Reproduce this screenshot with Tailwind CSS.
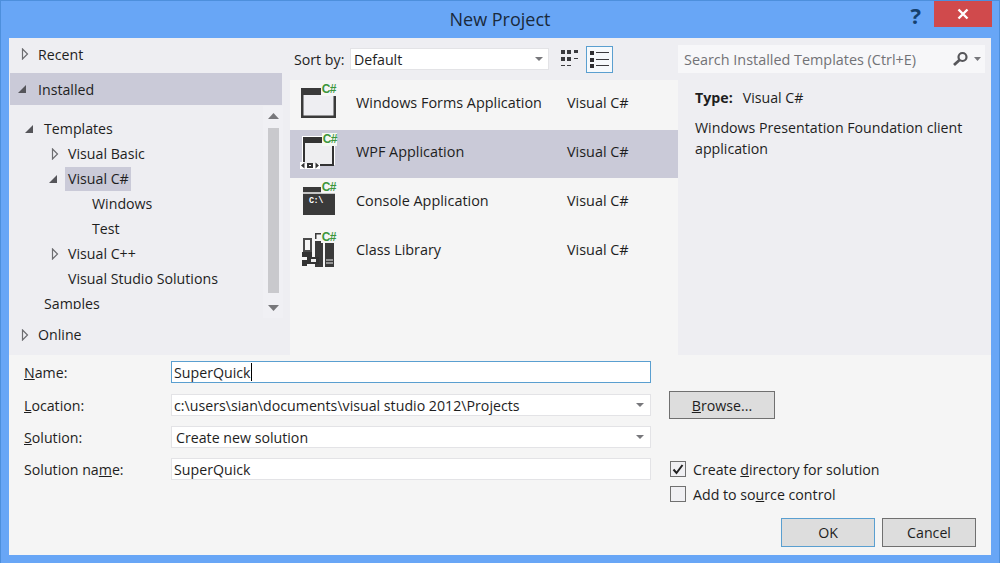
<!DOCTYPE html>
<html lang="en">
<head>
    <meta charset="UTF-8">
    <title>New Project</title>
    <script src="https://cdn.jsdelivr.net/npm/@tailwindcss/browser@4"></script>
</head>
<body class="w-[1000px] h-[563px] overflow-hidden bg-[#68a6f6] font-['Open_Sans',sans-serif] text-[14.2px] leading-[21px] text-[#1e1e1e]">
    <div class="h-[563px] flex flex-col border-t border-x border-[#4d8fdc] px-[8px] pb-[8px]">
        <!-- title bar -->
        <div class="h-[37px] shrink-0 flex items-start relative">
            <div class="flex-1 text-center text-[18px] leading-[27px] text-[#1a2a3c] pt-[5px]">New Project</div>
            <div class="absolute right-[70px] top-[-1px] text-[22px] leading-[30px] font-bold text-[#14406e]">?</div>
            <div class="absolute right-[-1px] top-0 w-[58px] h-[26px] bg-[#d04a4c] flex items-center justify-center">
                <svg width="12" height="12" viewBox="0 0 12 12"><path d="M1.5 1.5l9 9M10.5 1.5l-9 9" stroke="#fff" stroke-width="2.4"/></svg>
            </div>
        </div>
        <div class="flex-1 flex flex-col bg-[#f5f5f5]">
            <div class="h-[317px] shrink-0 flex bg-[#eeeef2]">
                <!-- left tree -->
                <div class="w-[281px] shrink-0 pl-[1px] flex flex-col">
                    <div class="h-[35px] flex items-center pb-[3px]">
                        <svg class="ml-[11px] mr-[9px]" width="8" height="12" viewBox="0 0 8 12"><path d="M1.5 1l5 5-5 5z" fill="none" stroke="#6d6d70" stroke-width="1.2"/></svg>
                        <span>Recent</span>
                    </div>
                    <div class="h-[32px] mr-[8px] flex items-center bg-[#cacad8]">
                        <svg class="ml-[7px] mr-[11px]" width="10" height="10" viewBox="0 0 10 10"><path d="M9 1v8H1z" fill="#55555a"/></svg>
                        <span>Installed</span>
                    </div>
                    <div class="h-[213px] flex">
                        <div class="flex-1 h-[204px] overflow-hidden pt-[11px]">
                            <div class="h-[25px] flex items-center">
                                <svg class="ml-[14px] mr-[10px]" width="10" height="10" viewBox="0 0 10 10"><path d="M9 1v8H1z" fill="#55555a"/></svg>
                                <span>Templates</span>
                            </div>
                            <div class="h-[25px] flex items-center">
                                <svg class="ml-[41px] mr-[9px]" width="8" height="12" viewBox="0 0 8 12"><path d="M1.5 1l5 5-5 5z" fill="none" stroke="#6d6d70" stroke-width="1.2"/></svg>
                                <span>Visual Basic</span>
                            </div>
                            <div class="h-[25px] flex items-center">
                                <svg class="ml-[38px] mr-[9px]" width="10" height="10" viewBox="0 0 10 10"><path d="M9 1v8H1z" fill="#55555a"/></svg>
                                <span class="bg-[#cacad8] h-[24px] leading-[24px] pl-[3px] pr-[2px] -ml-[2px]">Visual C#</span>
                            </div>
                            <div class="h-[25px] flex items-center pl-[82px]">Windows</div>
                            <div class="h-[25px] flex items-center pl-[82px]">Test</div>
                            <div class="h-[25px] flex items-center">
                                <svg class="ml-[41px] mr-[9px]" width="8" height="12" viewBox="0 0 8 12"><path d="M1.5 1l5 5-5 5z" fill="none" stroke="#6d6d70" stroke-width="1.2"/></svg>
                                <span>Visual C++</span>
                            </div>
                            <div class="h-[25px] flex items-center pl-[58px]">Visual Studio Solutions</div>
                            <div class="h-[25px] flex items-center pl-[34px]">Samples</div>
                        </div>
                        <!-- scrollbar -->
                        <div class="w-[20px] mr-[7px] mt-[1px] h-[212px] bg-[#f0f0f4] flex flex-col items-center">
                            <svg class="mt-[7px]" width="11" height="6" viewBox="0 0 11 6"><path d="M5.500 0l5.500 6H0z" fill="#77777b"/></svg>
                            <div class="w-[11px] h-[165px] mt-[9px] bg-[#c9c9cd]"></div>
                            <svg class="mt-[12px]" width="11" height="6" viewBox="0 0 11 6"><path d="M5.500 6l5.500-6H0z" fill="#77777b"/></svg>
                        </div>
                    </div>
                    <div class="h-[33px] flex items-center">
                        <svg class="ml-[11px] mr-[9px]" width="8" height="12" viewBox="0 0 8 12"><path d="M1.5 1l5 5-5 5z" fill="none" stroke="#6d6d70" stroke-width="1.2"/></svg>
                        <span>Online</span>
                    </div>
                </div>
                <!-- template list -->
                <div class="w-[388px] shrink-0 flex flex-col">
                    <div class="h-[42px] shrink-0 flex items-center pl-[4px]">
                        <span class="w-[56px]">Sort by:</span>
                        <div class="w-[199px] h-[22px] bg-white border border-[#e3e3e6] flex items-center pl-[3px] pr-[5px] justify-between">
                            <span>Default</span>
                            <svg width="8" height="4" viewBox="0 0 8 4"><path d="M0 0h8L4 4z" fill="#77777b"/></svg>
                        </div>
                        <svg class="ml-[12px]" width="17" height="18" viewBox="0 0 17 18" fill="#3a3a3e"><path d="M0 0h4v4H0zM6 0h4v4H6zM13 0h4v3h-4zM0 7h4v4H0zM6 7h4v4H6zM13 8h4v1h-4zM0 15h4v1H0zM6 15h4v1H6z"/></svg>
                        <div class="ml-[8px] w-[27px] h-[27px] border border-[#5a9fd0] bg-[#f6f9fc] flex items-center justify-center">
                            <svg width="19" height="19" viewBox="0 0 19 19"><path d="M0 1h4v4H0zM0 8h4v4H0zM0 14h4v4H0z" fill="#2f2f33"/><path d="M6 2.500h13M6 9.500h13M6 15.500h13" stroke="#3a3a3e"/></svg>
                        </div>
                    </div>
                    <div class="flex-1 bg-[#f5f5f5] pt-[1px] text-[14.4px]">
                        <div class="h-[49px] pb-[7px] flex items-center">
                            <div class="relative w-[36px] h-[36px] mt-[2px] ml-[10px] mr-[20px]">
                                <svg width="36" height="36" viewBox="0 0 36 36"><path d="M2 5h32v26H2z" fill="#eeeef2"/><path d="M1 3h21v7H1zM1 3h2.500v30H1zM33.500 10H36v23h-2.500zM1 30.500h35V33H1z" fill="#3a3a3a"/></svg>
                                <span class="absolute right-0 top-[-3px] pl-[1px] bg-[#f5f5f5] font-['Liberation_Sans',sans-serif] font-bold text-[12px] leading-[14px] tracking-[-0.5px] text-[#3c963c]">C#</span>
                            </div>
                            <span class="w-[211px]">Windows Forms Application</span>
                            <span>Visual C#</span>
                        </div>
                        <div class="h-[48px] pb-[6px] flex items-center bg-[#cacad8]">
                            <div class="relative w-[36px] h-[36px] ml-[10px] mr-[20px]">
                                <svg width="36" height="36" viewBox="0 0 36 36"><path d="M2 3h33v29H2zM0 29h20v7H0z" fill="#fff"/><path d="M3 4h22v6H3zM3 4h2v25H3zM32 10h2v22h-2zM20 31h14v2H20z" fill="#333"/><path d="M5 10h27v21H5z" fill="#eeeef0"/><path d="M1 32.500l3.500-3v6zM19 32.500l-3.500-3v6zM7 30h6v5H7z" fill="#333"/><path d="M9 32h2v1H9z" fill="#fff"/></svg>
                                <span class="absolute right-[-1px] top-0 pl-[1px] bg-[#f4f8f2] font-['Liberation_Sans',sans-serif] font-bold text-[12px] leading-[13px] tracking-[-0.5px] text-[#3c963c]">C#</span>
                            </div>
                            <span class="w-[211px]">WPF Application</span>
                            <span>Visual C#</span>
                        </div>
                        <div class="h-[49px] pb-[5px] flex items-center">
                            <div class="relative w-[36px] h-[36px] ml-[10px] mr-[20px]">
                                <svg width="36" height="36" viewBox="0 0 36 36"><path d="M3 5h32v28H3z" fill="#3a3a3a"/><path d="M3 11h32" stroke="#f5f5f5" stroke-width="1.500"/></svg>
                                <span class="absolute left-[9px] top-[14px] font-['Liberation_Mono',monospace] font-bold text-[8.500px] leading-[10px] tracking-[-0.5px] text-white">C:\</span>
                                <span class="absolute right-0 top-0 pl-[1px] bg-[#f5f5f5] font-['Liberation_Sans',sans-serif] font-bold text-[12px] leading-[11px] tracking-[-0.5px] text-[#3c963c]">C#</span>
                            </div>
                            <span class="w-[211px]">Console Application</span>
                            <span>Visual C#</span>
                        </div>
                        <div class="h-[49px] pb-[5px] flex items-center">
                            <div class="relative w-[36px] h-[36px] ml-[10px] mr-[20px]">
                                <svg width="36" height="36" viewBox="0 0 36 36"><path d="M4 8h7v12H4z" fill="none" stroke="#4a4a4a" stroke-width="2"/><path d="M15 2h6v1.500h-4.500V8H15zM15 10h8v26h-8zM25 7h9v29h-9z" fill="#3a3a3a"/><path d="M26 29h7M26 32h7" stroke="#eee"/><path d="M2 21h10v5H2zM7 26h12v7H7zM2 29h5v6H2z" fill="#333"/><path d="M11 28h5v3h-5z" fill="#eee"/></svg>
                                <span class="absolute right-0 top-[1px] pl-[1px] bg-[#f5f5f5] font-['Liberation_Sans',sans-serif] font-bold text-[12px] leading-[11px] tracking-[-0.5px] text-[#3c963c]">C#</span>
                            </div>
                            <span class="w-[211px]">Class Library</span>
                            <span>Visual C#</span>
                        </div>
                    </div>
                </div>
                <!-- search and details -->
                <div class="flex-1 flex flex-col">
                    <div class="h-[28px] mt-[7px] mr-[6px] shrink-0 bg-[#f7f7f9] flex items-center pl-[6px] pr-[4px] text-[14.4px] text-[#727276]">
                        <span class="flex-1">Search Installed Templates (Ctrl+E)</span>
                        <svg width="17" height="16" viewBox="0 0 17 16"><circle cx="10.500" cy="6" r="4" fill="none" stroke="#56565a" stroke-width="2.200"/><path d="M7.500 9L2 14" stroke="#56565a" stroke-width="2.800"/></svg>
                        <svg class="ml-[5px]" width="7" height="4" viewBox="0 0 7 4"><path d="M0 0h7L3.500 4z" fill="#77777b"/></svg>
                    </div>
                    <div class="flex-1 px-[17px] pt-[14px]">
                        <p class="h-[30px]"><b class="font-bold mr-[10px]">Type:</b>Visual C#</p>
                        <p>Windows Presentation Foundation client application</p>
                    </div>
                </div>
            </div>
            <!-- form -->
            <div class="flex-1 flex flex-col pl-[15px] pt-[6px] relative">
                <div class="flex items-center h-[22px]">
                    <label class="w-[147px]"><u>N</u>ame:</label>
                    <div class="w-[480px] h-[22px] bg-white border border-[#5a9fd0] flex items-center pl-[2px]">SuperQuick<span class="w-px h-[18px] bg-black"></span></div>
                </div>
                <div class="flex items-center h-[22px] mt-[11px]">
                    <label class="w-[147px]"><u>L</u>ocation:</label>
                    <div class="w-[480px] h-[22px] bg-white border border-[#e3e3e6] flex items-center justify-between pl-[2px] pr-[6px]">
                        <span>c:\users\sian\documents\visual studio 2012\Projects</span>
                        <svg width="8" height="4" viewBox="0 0 8 4"><path d="M0 0h8L4 4z" fill="#77777b"/></svg>
                    </div>
                    <button class="ml-[18px] w-[106px] h-[28px] bg-[#dddddd] border border-[#707070]"><u>B</u>rowse...</button>
                </div>
                <div class="flex items-center h-[22px] mt-[10px]">
                    <label class="w-[147px]"><u>S</u>olution:</label>
                    <div class="w-[480px] h-[22px] bg-white border border-[#e3e3e6] flex items-center justify-between pl-[4px] pr-[6px]">
                        <span>Create new solution</span>
                        <svg width="8" height="4" viewBox="0 0 8 4"><path d="M0 0h8L4 4z" fill="#77777b"/></svg>
                    </div>
                </div>
                <div class="flex items-center h-[22px] mt-[10px]">
                    <label class="w-[147px]">Solution na<u>m</u>e:</label>
                    <div class="w-[480px] h-[22px] bg-white border border-[#e3e3e6] flex items-center pl-[2px]">SuperQuick</div>
                    <div class="ml-[19px] w-[16px] h-[16px] bg-[#f0f0f3] border border-[#707070] flex items-center justify-center">
                        <svg width="12" height="11" viewBox="0 0 12 11"><path d="M1.500 5.500l3 3.500 6-8" fill="none" stroke="#222" stroke-width="2"/></svg>
                    </div>
                    <span class="ml-[7px]">Create <u>d</u>irectory for solution</span>
                </div>
                <div class="flex items-center h-[22px] mt-[3px] ml-[646px]">
                    <div class="w-[16px] h-[16px] bg-[#f0f0f3] border border-[#707070]"></div>
                    <span class="ml-[7px]">Add to so<u>u</u>rce control</span>
                </div>
                <div class="flex justify-end gap-[7px] pr-[15px] mt-[13px]">
                    <button class="w-[94px] h-[29px] bg-[#dddddd] border border-[#5a9fd0]">OK</button>
                    <button class="w-[94px] h-[29px] bg-[#dddddd] border border-[#707070]">Cancel</button>
                </div>
            </div>
        </div>
    </div>
</body>
</html>
